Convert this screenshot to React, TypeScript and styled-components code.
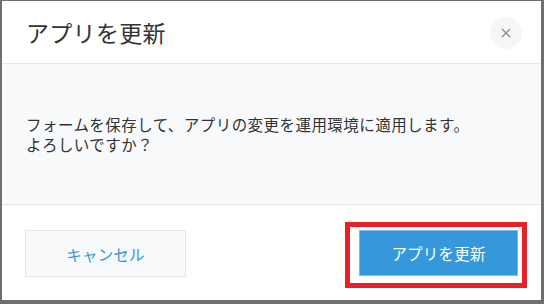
import React from "react";
import styled, { createGlobalStyle } from "styled-components";

const Global = createGlobalStyle`
  html, body { margin: 0; padding: 0; background: #6f6f6f; }
  body { font-family: "Noto Sans CJK JP", "Noto Sans", sans-serif; }
  #root { width: 544px; height: 304px; }
`;

const Frame = styled.div`
  width: 544px;
  height: 304px;
  box-sizing: border-box;
  padding: 1px 3px 4px 2px;
  background: #6f6f6f;
`;

const Dialog = styled.div`
  height: 100%;
  background: #fff;
  display: flex;
  flex-direction: column;
`;

const Header = styled.div`
  height: 63px;
  box-sizing: border-box;
  display: flex;
  align-items: center;
  justify-content: space-between;
  padding: 0 19px 0 24px;
  border-bottom: 1px solid #e3e7e8;
`;

const Title = styled.h1`
  margin: 0;
  font-size: 23px;
  font-weight: 400;
  color: #333;
  line-height: 1;
  letter-spacing: 0.3px;
`;

const CloseButton = styled.button`
  width: 32px;
  height: 32px;
  border-radius: 50%;
  border: none;
  background: #f5f6f8;
  display: flex;
  align-items: center;
  justify-content: center;
  padding: 0;
  margin-bottom: -2px;
`;

const Body = styled.div`
  height: 141px;
  box-sizing: border-box;
  background: #f7f9fa;
  border-bottom: 1px solid #e3e7e8;
  display: flex;
  align-items: center;
  padding: 0 24px;
`;

const Message = styled.p`
  margin: 0;
  font-size: 15.5px;
  line-height: 20px;
  letter-spacing: 0.45px;
  color: #333;
`;

const Footer = styled.div`
  flex: 1;
  display: flex;
  align-items: flex-start;
  justify-content: space-between;
  padding: 25px 23px 0 23px;
`;

const Button = styled.button<{ $primary?: boolean }>`
  position: relative;
  height: ${(p) => (p.$primary ? "46px" : "47px")};
  width: ${(p) => (p.$primary ? "159px" : "161px")};
  box-sizing: border-box;
  font-family: inherit;
  font-size: 15.5px;
  letter-spacing: 0.2px;
  padding: 0;
  border: 1px solid ${(p) => (p.$primary ? "#7dbbe8" : "#e3e7e8")};
  background: ${(p) => (p.$primary ? "#3498db" : "#f7f9fa")};
  color: ${(p) => (p.$primary ? "#fff" : "#3498db")};
`;

const Highlight = styled.span`
  position: absolute;
  left: -15px;
  top: -9px;
  right: -10px;
  bottom: -13px;
  border: 5px solid #e8202a;
  pointer-events: none;
`;

export default function App() {
  return (
    <>
      <Global />
      <Frame>
        <Dialog>
          <Header>
            <Title>アプリを更新</Title>
            <CloseButton aria-label="close">
              <svg width="10" height="10" viewBox="0 0 10 10">
                <path d="M1 1L9 9M9 1L1 9" stroke="#8a8d90" strokeWidth="1.4" />
              </svg>
            </CloseButton>
          </Header>
          <Body>
            <Message>
              フォームを保存して、アプリの変更を運用環境に適用します。
              <br />
              よろしいですか？
            </Message>
          </Body>
          <Footer>
            <Button>キャンセル</Button>
            <Button $primary>
              アプリを更新
              <Highlight />
            </Button>
          </Footer>
        </Dialog>
      </Frame>
    </>
  );
}
